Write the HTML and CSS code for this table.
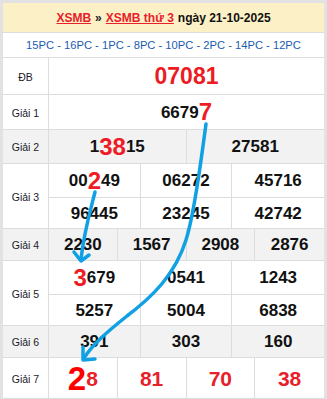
FILE: index.html
```html
<!DOCTYPE html>
<html lang="vi">
<head>
<meta charset="utf-8">
<link rel="stylesheet" href="styles.css">
</head>
<body>
<div class="box">
  <div class="head"><a href="#">XSMB</a><span class="sep">»</span><a href="#">XSMB thứ 3</a><span class="date">ngày 21-10-2025</span></div>
  <div class="pc">15PC - 16PC - 1PC - 8PC - 10PC - 2PC - 14PC - 12PC</div>

  <div class="row">
    <div class="lbl">ĐB</div>
    <div class="cells c1"><div class="n h36 db">07081</div></div>
  </div>
  <div class="row">
    <div class="lbl">Giải 1</div>
    <div class="cells c1"><div class="n h34">6679<span class="big">7</span></div></div>
  </div>
  <div class="row alt">
    <div class="lbl">Giải 2</div>
    <div class="cells c2">
      <div class="n h33">1<span class="big">38</span>15</div>
      <div class="n h33">27581</div>
    </div>
  </div>
  <div class="row">
    <div class="lbl">Giải 3</div>
    <div class="cells c3">
      <div class="n h34 top">00<span class="big">2</span>49</div>
      <div class="n h34 top">06272</div>
      <div class="n h34 top">45716</div>
      <div class="n h30">96445</div>
      <div class="n h30">23245</div>
      <div class="n h30">42742</div>
    </div>
  </div>
  <div class="row alt">
    <div class="lbl">Giải 4</div>
    <div class="cells c4">
      <div class="n h31">2230</div>
      <div class="n h31">1567</div>
      <div class="n h31">2908</div>
      <div class="n h31">2876</div>
    </div>
  </div>
  <div class="row">
    <div class="lbl">Giải 5</div>
    <div class="cells c3">
      <div class="n h34 top"><span class="big">3</span>679</div>
      <div class="n h34 top">0541</div>
      <div class="n h34 top">1243</div>
      <div class="n h30">5257</div>
      <div class="n h30">5004</div>
      <div class="n h30">6838</div>
    </div>
  </div>
  <div class="row alt">
    <div class="lbl">Giải 6</div>
    <div class="cells c3">
      <div class="n h31">391</div>
      <div class="n h31">303</div>
      <div class="n h31">160</div>
    </div>
  </div>
  <div class="row">
    <div class="lbl">Giải 7</div>
    <div class="cells c4">
      <div class="n h40 red"><span class="huge">2</span>8</div>
      <div class="n h40 red">81</div>
      <div class="n h40 red">70</div>
      <div class="n h40 red">38</div>
    </div>
  </div>
</div>

<svg class="arrows" width="327" height="399" viewBox="0 0 327 399">
  <path d="M206,124 C201,160 195,212 186,240 C175,275 152,297 127,316 C107,332 93,344 84,358" />
  <path d="M83,347 L83,360 L95,359" />
  <path d="M95,192 C90,212 84,232 81,259" />
  <path d="M74,252 L81,261 L89,255" />
</svg>
</body>
</html>
```

FILE: styles.css
```css
* { box-sizing: border-box; }
html, body { margin: 0; padding: 0; background: #fff; }
body {
  font-family: "Liberation Sans", Arial, sans-serif;
  width: 327px;
  height: 399px;
  overflow: hidden;
  position: relative;
}
.box {
  border: 3px solid #e2e2e2;
  border-bottom: none;
}
.head {
  height: 30px;
  background: #fcf0c6;
  border-bottom: 1px solid #dddddd;
  display: flex;
  align-items: center;
  justify-content: center;
  font-size: 12px;
  font-weight: bold;
  color: #111;
  gap: 4px;
}
.head a { color: #e8202a; text-decoration: underline; }
.head .sep { color: #222; }
.pc {
  height: 25px;
  border-bottom: 1px solid #dddddd;
  display: flex;
  align-items: center;
  justify-content: center;
  color: #1b5db0;
  font-size: 11.2px;
}
.row {
  display: grid;
  grid-template-columns: 46px 1fr;
  border-bottom: 1px solid #dddddd;
}
.row.alt { background: #f2f2f2; }
.lbl {
  border-right: 1px solid #dddddd;
  display: flex;
  align-items: center;
  justify-content: center;
  font-size: 10.5px;
  color: #1a1a2a;
  padding-top: 1px;
}
.cells { display: grid; }
.c1 { grid-template-columns: 1fr; }
.c2 { grid-template-columns: repeat(2, 1fr); }
.c3 { grid-template-columns: repeat(3, 1fr); }
.c4 { grid-template-columns: repeat(4, 1fr); }
.n {
  display: flex;
  align-items: center;
  justify-content: center;
  font-weight: bold;
  font-size: 17px;
  color: #111;
  border-right: 1px solid #dddddd;
  line-height: 1;
}
.c1 .n:last-child,
.c2 .n:nth-child(2n),
.c3 .n:nth-child(3n),
.c4 .n:nth-child(4n) { border-right: none; }
.n.top { border-bottom: 1px solid #dddddd; }
.h30 { height: 30px; }
.h31 { height: 31px; }
.h33 { height: 33px; }
.h34 { height: 34px; }
.h36 { height: 36px; }
.h40 { height: 40px; }
.db { color: #ec1c24; font-size: 23px; }
.big { color: #ee1c25; font-size: 24px; }
.red { color: #e8202a; font-size: 21px; }
.huge { font-size: 33px; color: #ff0000; }
.arrows {
  position: absolute;
  left: 0;
  top: 0;
  pointer-events: none;
}
.arrows path {
  fill: none;
  stroke: #10a0e4;
  stroke-width: 3.5;
  stroke-linecap: round;
  stroke-linejoin: round;
}
```
